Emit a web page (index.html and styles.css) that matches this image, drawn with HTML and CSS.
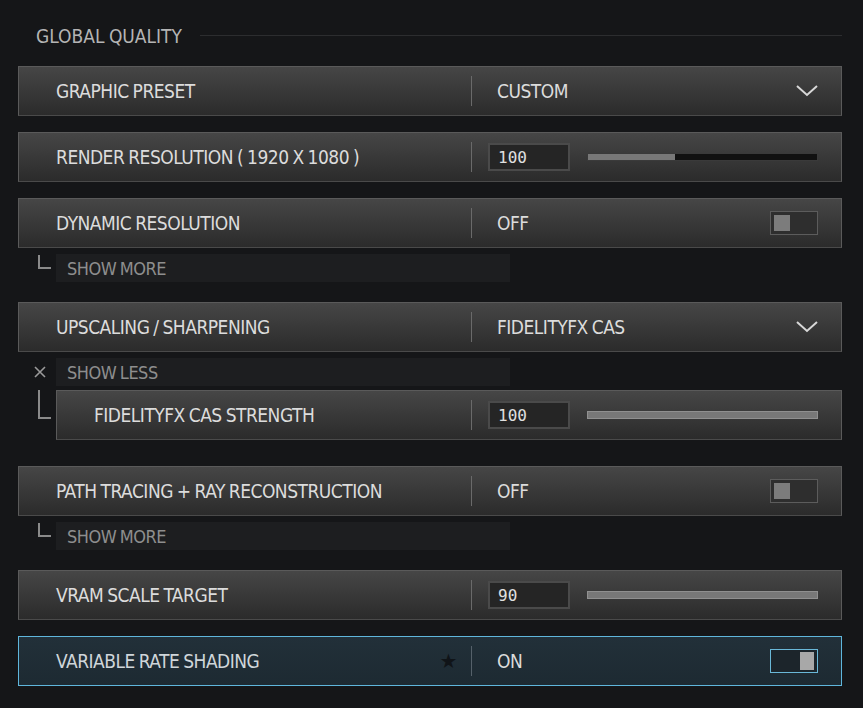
FILE: index.html
```html
<!DOCTYPE html>
<html lang="en">
<head>
  <meta charset="UTF-8" />
  <title>Global Quality</title>
  <link rel="stylesheet" href="styles.css">
</head>
<body>
  <div class="panel">
    <div class="section-head">
      <span>GLOBAL QUALITY</span>
      <div class="rule"></div>
    </div>

    <div class="row">
      <div class="label">GRAPHIC PRESET</div>
      <div class="value">
        <span>CUSTOM</span>
        <svg class="chev" width="22" height="12" viewBox="0 0 22 12"><path d="M1 1 L11 10 L21 1" fill="none" stroke="#d8d8d8" stroke-width="2"/></svg>
      </div>
    </div>

    <div class="row">
      <div class="label">RENDER RESOLUTION ( 1920 X 1080 )</div>
      <div class="value">
        <div class="num">100</div>
        <div class="slider"><div class="fill" style="width: 38%"></div></div>
      </div>
    </div>

    <div class="group">
      <div class="row">
        <div class="label">DYNAMIC RESOLUTION</div>
        <div class="value">
          <span>OFF</span>
          <div class="toggle"><div class="knob"></div></div>
        </div>
      </div>
      <div class="more">
        <div class="corner"></div>
        <div class="more-bar">SHOW MORE</div>
      </div>
    </div>

    <div class="group">
      <div class="row">
        <div class="label">UPSCALING / SHARPENING</div>
        <div class="value">
          <span>FIDELITYFX CAS</span>
          <svg class="chev" width="22" height="12" viewBox="0 0 22 12"><path d="M1 1 L11 10 L21 1" fill="none" stroke="#d8d8d8" stroke-width="2"/></svg>
        </div>
      </div>
      <div class="more">
        <svg class="close" width="12" height="12" viewBox="0 0 12 12"><path d="M1 1 L11 11 M11 1 L1 11" stroke="#9a9a9a" stroke-width="1.6"/></svg>
        <div class="more-bar">SHOW LESS</div>
      </div>
      <div class="sub">
        <div class="sub-corner"></div>
        <div class="row sub-row">
          <div class="label">FIDELITYFX CAS STRENGTH</div>
          <div class="value">
            <div class="num">100</div>
            <div class="slider full"><div class="fill" style="width: 100%"></div></div>
          </div>
        </div>
      </div>
    </div>

    <div class="group">
      <div class="row">
        <div class="label">PATH TRACING + RAY RECONSTRUCTION</div>
        <div class="value">
          <span>OFF</span>
          <div class="toggle"><div class="knob"></div></div>
        </div>
      </div>
      <div class="more">
        <div class="corner"></div>
        <div class="more-bar">SHOW MORE</div>
      </div>
    </div>

    <div class="row">
      <div class="label">VRAM SCALE TARGET</div>
      <div class="value">
        <div class="num">90</div>
        <div class="slider full"><div class="fill" style="width: 100%"></div></div>
      </div>
    </div>

    <div class="row active">
      <div class="label">VARIABLE RATE SHADING <span class="star">&#9733;</span></div>
      <div class="value">
        <span>ON</span>
        <div class="toggle on"><div class="knob"></div></div>
      </div>
    </div>
  </div>
</body>
</html>
```

FILE: styles.css
```css
* {
  box-sizing: border-box;
}

body {
  margin: 0;
  background: #151618;
  color: #dcdcdc;
  font-family: "Liberation Sans Narrow", "DejaVu Sans Condensed", "Liberation Sans", sans-serif;
  letter-spacing: -0.5px;
  word-spacing: -1px;
}

.panel {
  padding: 22px 21px 0 18px;
  display: flex;
  flex-direction: column;
  gap: 16px;
}

.section-head {
  display: flex;
  align-items: center;
  gap: 18px;
  padding-left: 18px;
  height: 28px;
  font-size: 19px;
  letter-spacing: 0;
  color: #b4b4b4;
}

.rule {
  flex: 1;
  height: 1px;
  background: #2c2d2f;
  margin-top: -2px;
}

.row {
  display: flex;
  align-items: center;
  height: 50px;
  border: 1px solid #5a5a5a;
  border-bottom-color: #4a4a4a;
  background: linear-gradient(#464646, #2b2b2b);
  font-size: 19px;
}

.label {
  width: 452px;
  padding-left: 37px;
  display: flex;
  align-items: center;
}

.value {
  flex: 1;
  display: flex;
  align-items: center;
  height: 30px;
  border-left: 1px solid #6a6a6a;
  padding: 0 23px 0 25px;
}

.value span {
  flex: 1;
}

.num {
  width: 82px;
  height: 28px;
  margin-left: -9px;
  border: 2px solid #4a4a4a;
  background: #252525;
  padding: 3px 0 0 8px;
  font-family: "DejaVu Sans Mono", monospace;
  font-size: 16px;
  letter-spacing: 0;
  color: #e0e0e0;
}

.slider {
  flex: 1;
  margin-left: 17px;
  height: 8px;
  background: #111;
  border: 1px solid #3a3a3a;
}

.slider .fill {
  height: 100%;
  background: #787878;
}

.slider.full {
  border-color: #909090;
}

.toggle {
  width: 48px;
  height: 24px;
  border: 1px solid #5c5c5c;
  background: #2e2e2e;
  padding: 3px;
  display: flex;
}

.knob {
  width: 16px;
  height: 16px;
  background: #7c7c7c;
}

.toggle.on {
  justify-content: flex-end;
  border-color: #6ab8d8;
  background: #1c252b;
}

.toggle.on .knob {
  width: 14px;
  height: 18px;
  margin-top: -1px;
  background: #a8a8a8;
}

.group {
  display: flex;
  flex-direction: column;
  gap: 6px;
}

.group + .row,
.group + .group {
  margin-top: 4px;
}

.more {
  display: flex;
  align-items: center;
  height: 28px;
}

.corner {
  width: 13px;
  height: 14px;
  margin: -12px 5px 0 20px;
  border-left: 2px solid #8a8a8a;
  border-bottom: 2px solid #8a8a8a;
}

.close {
  margin: 0 10px 0 16px;
}

.more-bar {
  width: 454px;
  height: 28px;
  background: #1d1e20;
  color: #8e8e8e;
  font-size: 18px;
  padding: 4px 0 0 11px;
}

.sub {
  display: flex;
  margin: -2px 0 6px;
}

.sub-corner {
  width: 13px;
  height: 29px;
  margin: 0 5px 0 20px;
  border-left: 2px solid #8a8a8a;
  border-bottom: 2px solid #8a8a8a;
}

.sub-row {
  flex: 1;
}

.sub-row .label {
  width: 414px;
}

.active {
  border-color: #5fb6dc;
  background: linear-gradient(#223039, #1d2a32);
}

.active .label {
  color: #cfd6da;
}

.star {
  margin-left: auto;
  margin-right: 14px;
  color: #101418;
  font-family: "DejaVu Sans", sans-serif;
  font-size: 20px;
}

.active .value {
  border-left-color: #55616a;
}
```
